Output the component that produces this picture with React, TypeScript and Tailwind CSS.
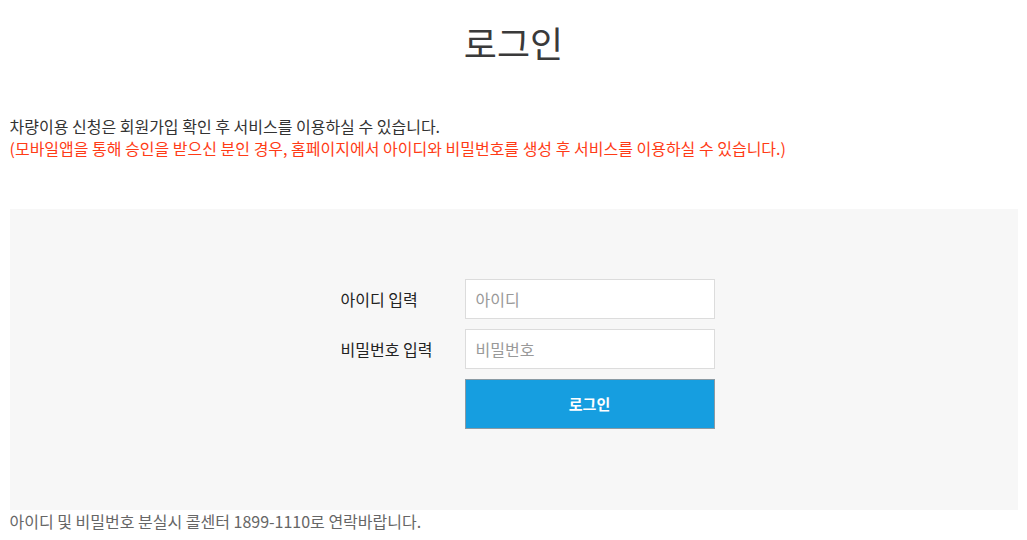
const font = { fontFamily: '"Noto Sans CJK KR", "Noto Sans", sans-serif' };

export default function App() {
  return (
    <div className="min-h-[540px] bg-white" style={font}>
      <div className="w-[1008px] mx-auto">
        <h1 className="text-center text-[36px] leading-[40px] text-[#3a3a3a] pt-[22px] font-normal">로그인</h1>

        <div className="mt-[53px] text-[16px] leading-[22px]">
          <p className="text-[#333]">차량이용 신청은 회원가입 확인 후 서비스를 이용하실 수 있습니다.</p>
          <p className="text-[#ff3b16]">
            (모바일앱을 통해 승인을 받으신 분인 경우, 홈페이지에서 아이디와 비밀번호를 생성 후 서비스를 이용하실 수 있습니다.)
          </p>
        </div>

        <div className="mt-[50px] bg-[#f7f7f7] h-[301px] pt-[70px] pl-[331px]">
          <div className="flex flex-col gap-[10px]">
            <div className="flex items-center">
              <label className="w-[124px] text-[16px] text-[#222]">아이디 입력</label>
              <input
                className="w-[250px] h-[40px] bg-white border border-[#dcdcdc] px-[10px] text-[16px] outline-none placeholder:text-[#999]"
                placeholder="아이디"
              />
            </div>
            <div className="flex items-center">
              <label className="w-[124px] text-[16px] text-[#222]">비밀번호 입력</label>
              <input
                type="password"
                className="w-[250px] h-[40px] bg-white border border-[#dcdcdc] px-[10px] text-[16px] outline-none placeholder:text-[#999]"
                placeholder="비밀번호"
              />
            </div>
            <div className="flex">
              <div className="w-[124px]" />
              <button className="w-[250px] h-[50px] bg-[#169ee0] border border-[#8a9aa3] text-white text-[15px] font-bold">
                로그인
              </button>
            </div>
          </div>
        </div>

        <p className="text-[16px] leading-[22px] text-[#666]">
          아이디 및 비밀번호 분실시 콜센터 1899-1110로 연락바랍니다.
        </p>
      </div>
    </div>
  );
}
